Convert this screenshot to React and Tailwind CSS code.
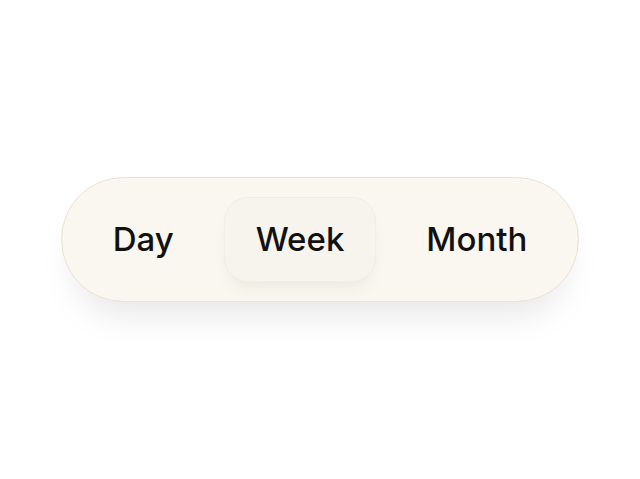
import React from 'react';

const options = ['Day', 'Week', 'Month'];

export default function App() {
  const active = 'Week';

  return (
    <div className="w-full h-[479px] bg-white flex items-center justify-center" style={{ fontFamily: 'Inter, "Noto Sans", sans-serif' }}>
      <div className="flex items-center gap-[18px] p-[19px] rounded-full border border-[#e9e2d4] bg-[#f9f7f0] shadow-[0_26px_36px_-14px_rgba(0,0,0,0.10)]">
        {options.map((opt) => (
          <button
            key={opt}
            className={`h-[85px] px-[31px] rounded-[24px] text-[33px] font-medium text-[#111] ${
              opt === active
                ? 'bg-[#f7f4ed] border border-[#f1ede3] shadow-[0_10px_16px_-6px_rgba(120,100,60,0.10)]'
                : 'border border-transparent'
            }`}
          >
            {opt}
          </button>
        ))}
      </div>
    </div>
  );
}
